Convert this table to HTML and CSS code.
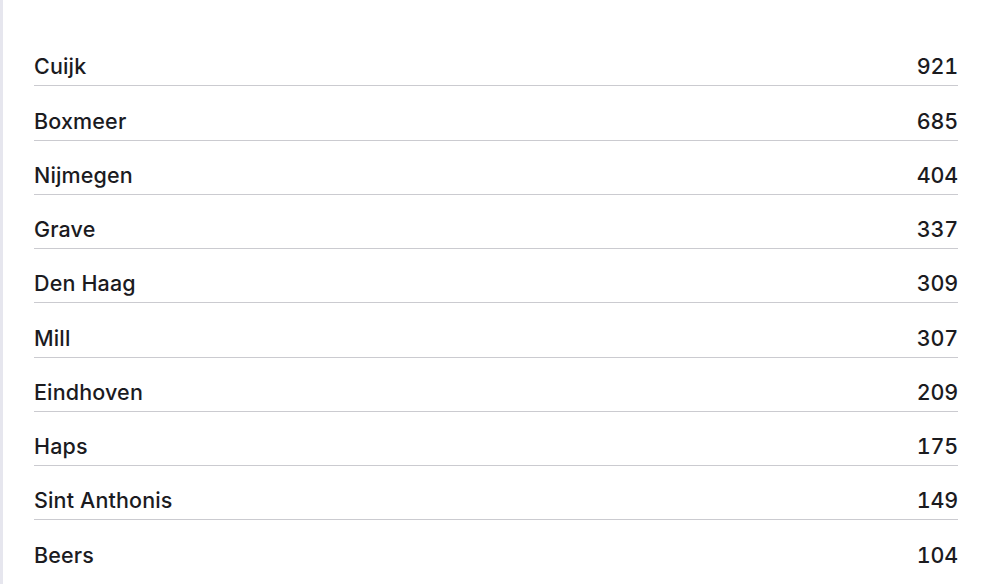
FILE: index.html
```html
<!DOCTYPE html>
<html lang="nl">
<head>
<meta charset="utf-8">
<title>Plaatsen</title>
<link rel="stylesheet" href="styles.css">
</head>
<body>
<div class="panel">
  <ul class="list">
    <li class="row"><span class="name">Cuijk</span><span class="count">921</span></li>
    <li class="row"><span class="name">Boxmeer</span><span class="count">685</span></li>
    <li class="row"><span class="name">Nijmegen</span><span class="count">404</span></li>
    <li class="row"><span class="name">Grave</span><span class="count">337</span></li>
    <li class="row"><span class="name">Den Haag</span><span class="count">309</span></li>
    <li class="row"><span class="name">Mill</span><span class="count">307</span></li>
    <li class="row"><span class="name">Eindhoven</span><span class="count">209</span></li>
    <li class="row"><span class="name">Haps</span><span class="count">175</span></li>
    <li class="row"><span class="name">Sint Anthonis</span><span class="count">149</span></li>
    <li class="row"><span class="name">Beers</span><span class="count">104</span></li>
  </ul>
</div>
</body>
</html>
```
FILE: styles.css
```css
html, body {
  margin: 0;
  padding: 0;
  background: #ffffff;
}
body {
  font-family: Inter, "Noto Sans", sans-serif;
  color: #1b1b1f;
  overflow: hidden;
}
.panel {
  border-left: 3px solid #e6e6ee;
  height: 584px;
  box-sizing: border-box;
  padding: 32px 42px 0 31px;
}
.list {
  list-style: none;
  margin: 0;
  padding: 0;
}
.row {
  display: flex;
  justify-content: space-between;
  align-items: flex-end;
  height: 54.25px;
  box-sizing: border-box;
  border-bottom: 1.5px solid #cbcbd0;
  padding-bottom: 6px;
  font-size: 21.5px;
  font-weight: 500;
  line-height: 26px;
}
.row:last-child {
  border-bottom-color: transparent;
}
.name {
  letter-spacing: 0.15px;
}
.count {
  font-variant-numeric: tabular-nums;
  letter-spacing: -0.2px;
}
```
